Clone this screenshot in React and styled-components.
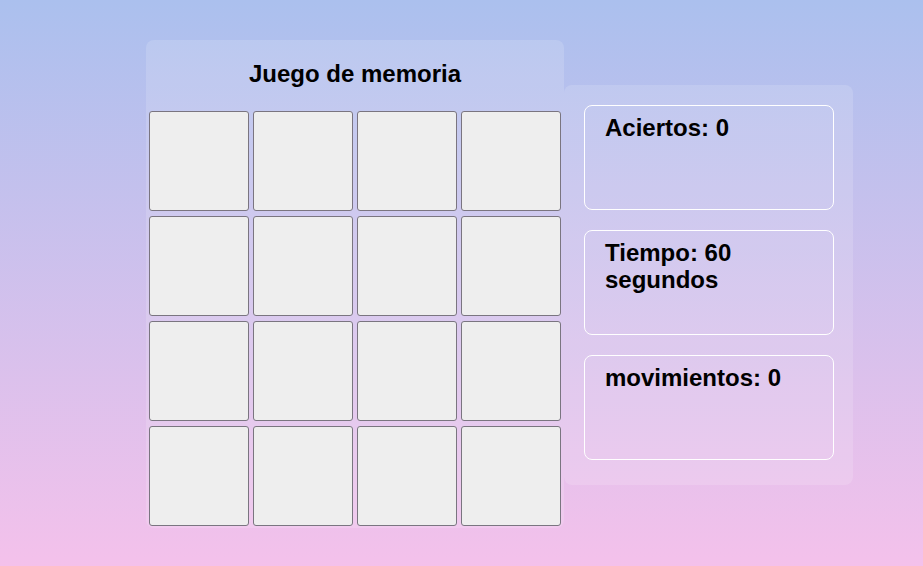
import React from 'react';
import styled, { createGlobalStyle } from 'styled-components';

const GlobalStyle = createGlobalStyle`
    html, body {
        margin: 0;
        padding: 0;
        height: 100%;
    }
    body {
        min-height: 566px;
        background: linear-gradient(180deg, #abc0ee 0%, #f4c1eb 100%);
        font-family: "Liberation Sans", Arial, sans-serif;
        color: #000;
    }
`;

const stats = [
    { id: 'aciertos', text: 'Aciertos: 0' },
    { id: 'tiempo', text: 'Tiempo: 60 segundos' },
    { id: 'movimientos', text: 'movimientos: 0' }
];

const App = () => {
    const cards = Array.from({ length: 16 }, (_, i) => i);

    return (
        <>
            <GlobalStyle />
            <Wrapper>
                <Board>
                    <Title>Juego de memoria</Title>
                    <Grid>
                        {cards.map(n => <Card key={n} />)}
                    </Grid>
                </Board>
                <Stats>
                    {stats.map(s => (
                        <StatBox key={s.id}>
                            <StatText>{s.text}</StatText>
                        </StatBox>
                    ))}
                </Stats>
            </Wrapper>
        </>
    );
};

const Wrapper = styled.main`
    display: flex;
    align-items: flex-start;
    padding: 40px 0 0 146px;
`;

const Board = styled.section`
    width: 418px;
    box-sizing: border-box;
    padding: 1px 3px 2px;
    border-radius: 8px;
    background-color: rgba(255, 255, 255, 0.15);
`;

const Title = styled.h2`
    margin: 19px 0 0;
    height: 51px;
    font-size: 24px;
    font-weight: bold;
    text-align: center;
`;

const Grid = styled.div`
    display: grid;
    grid-template-columns: repeat(4, 100px);
    grid-auto-rows: 100px;
    column-gap: 4px;
    row-gap: 5px;
`;

const Card = styled.div`
    box-sizing: border-box;
    border: 1px solid #7a7580;
    border-radius: 3px;
    background-color: #eeeeee;
`;

const Stats = styled.aside`
    margin-top: 45px;
    width: 289px;
    height: 400px;
    box-sizing: border-box;
    padding: 20px 19px 20px 20px;
    display: flex;
    flex-direction: column;
    gap: 20px;
    border-radius: 8px;
    background-color: rgba(255, 255, 255, 0.15);
`;

const StatBox = styled.div`
    height: 105px;
    box-sizing: border-box;
    padding: 8px 20px 0;
    border: 1px solid #ffffff;
    border-radius: 8px;
`;

const StatText = styled.h2`
    margin: 0;
    font-size: 24px;
    font-weight: bold;
    line-height: 27px;
`;

export default App;
